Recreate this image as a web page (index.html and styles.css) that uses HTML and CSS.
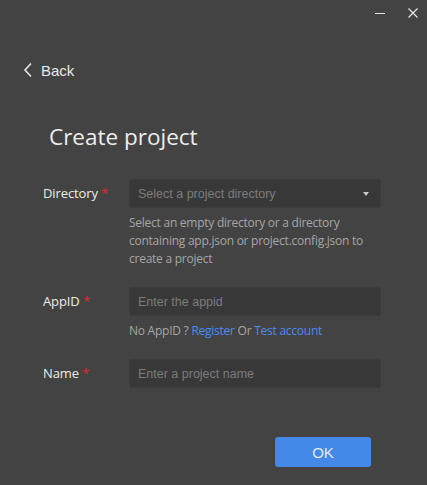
FILE: index.html
```html
<!DOCTYPE html>
<html>
<head>
<meta charset="utf-8">
<link rel="stylesheet" href="styles.css">
</head>
<body>
<div class="window">
  <div class="titlebar">
    <span class="tb-btn min"><svg width="12" height="12" viewBox="0 0 12 12"><line x1="1" y1="6.5" x2="11" y2="6.5" stroke="#e6e6e6" stroke-width="1"/></svg></span>
    <span class="tb-btn close"><svg width="12" height="12" viewBox="0 0 12 12"><path d="M1.5 1.5 L10.5 10.5 M10.5 1.5 L1.5 10.5" stroke="#e6e6e6" stroke-width="1.2"/></svg></span>
  </div>
  <div class="back">
    <svg class="chev" width="10" height="16" viewBox="0 0 10 16"><path d="M8 1.5 L2 8 L8 14.5" fill="none" stroke="#e8e8e8" stroke-width="1.6"/></svg>
    <span>Back</span>
  </div>
  <h1 class="title">Create project</h1>
  <div class="form">
    <div class="row">
      <div class="label">Directory <span class="req">*</span></div>
      <div class="field">
        <div class="input select"><span>Select a project directory</span><span class="caret"></span></div>
        <div class="help">Select an empty directory or a directory containing app.json or project.config.json to create a project</div>
      </div>
    </div>
    <div class="row">
      <div class="label">AppID <span class="req">*</span></div>
      <div class="field">
        <div class="input"><span>Enter the appid</span></div>
        <div class="help">No AppID ? <span class="link">Register</span> Or <span class="link">Test account</span></div>
      </div>
    </div>
    <div class="row">
      <div class="label">Name <span class="req">*</span></div>
      <div class="field">
        <div class="input"><span>Enter a project name</span></div>
      </div>
    </div>
  </div>
  <div class="actions">
    <button class="ok">OK</button>
  </div>
</div>
</body>
</html>
```
FILE: styles.css
```css
html, body {
  margin: 0;
  padding: 0;
  background: #434343;
}
.window {
  width: 427px;
  height: 485px;
  background: #434343;
  font-family: "Open Sans", "Liberation Sans", sans-serif;
  color: #e8e8e8;
  overflow: hidden;
}
.titlebar {
  height: 26px;
  display: flex;
  justify-content: flex-end;
  align-items: center;
  padding-right: 8px;
  gap: 21px;
}
.tb-btn {
  display: flex;
  width: 12px;
  height: 12px;
}
.back {
  display: flex;
  align-items: center;
  gap: 8px;
  margin-top: 36px;
  padding-left: 23px;
  font-family: "Liberation Sans", Arial, sans-serif;
  font-size: 15px;
  color: #e8e8e8;
  height: 16px;
}
.title {
  margin: 43px 0 0 49px;
  font-weight: 400;
  font-size: 22.5px;
  line-height: 32px;
  color: #ededed;
}
.form {
  margin-top: 26px;
  padding-left: 43px;
  display: flex;
  flex-direction: column;
  gap: 19px;
}
.row {
  display: grid;
  grid-template-columns: 86px 252px;
}
.label {
  font-size: 13px;
  letter-spacing: -0.1px;
  line-height: 29px;
  color: #ececec;
}
.req {
  color: #e8282a;
}
.input {
  height: 29px;
  box-sizing: border-box;
  background: #383838;
  border: 1px solid #3c3c3c;
  border-radius: 3px;
  display: flex;
  align-items: center;
  justify-content: space-between;
  padding: 0 11px 0 8px;
  font-family: "Liberation Sans", Arial, sans-serif;
  font-size: 12.5px;
  color: #7c7c7c;
}
.caret {
  width: 0;
  height: 0;
  border-left: 3.5px solid transparent;
  border-right: 3.5px solid transparent;
  border-top: 4px solid #c8c8c8;
}
.help {
  margin-top: 6px;
  font-size: 12px;
  letter-spacing: -0.25px;
  line-height: 18px;
  color: #a6a6a6;
}
.link {
  color: #4a8cf0;
}
.actions {
  display: flex;
  justify-content: flex-end;
  padding-right: 56px;
  margin-top: 49px;
}
.ok {
  width: 96px;
  height: 30px;
  border: none;
  border-radius: 3px;
  background: #4589e8;
  color: #e3e9f2;
  font-family: "Liberation Sans", Arial, sans-serif;
  font-size: 15px;
  padding: 0;
}
```
